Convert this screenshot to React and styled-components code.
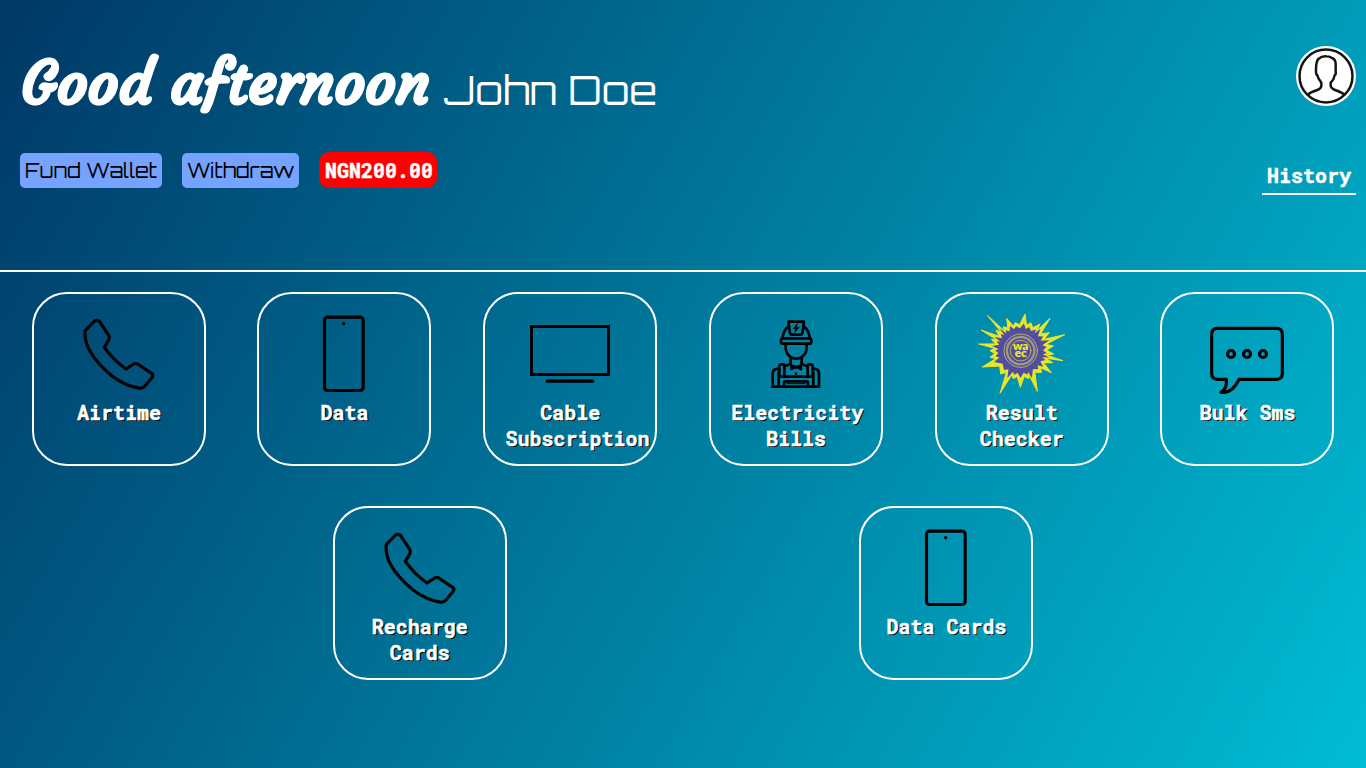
import React from "react";
import styled, { createGlobalStyle } from "styled-components";

const mono = `"Roboto Mono", "DejaVu Sans Mono", "Liberation Mono", monospace`;
const tech = `Orbitron, Inter, "Liberation Sans", sans-serif`;
const script = `Courgette, Lato, "Open Sans", sans-serif`;

const GlobalStyle = createGlobalStyle`
  * { box-sizing: border-box; }
  html, body { margin: 0; padding: 0; }
  body { overflow: hidden; }
`;

const Page = styled.div`
  min-height: 100vh;
  background: linear-gradient(120deg, #003866, #00bcd4);
  color: #fff;
  font: 700 20px/26px ${mono};
  -webkit-text-stroke: 0.5px currentColor;
`;

const Header = styled.header`
  display: flex;
  justify-content: space-between;
  height: 272px;
  padding: 0 10px 0 20px;
  border-bottom: 2px solid #fff;
`;

const Intro = styled.div`
  padding-top: 46px;
  -webkit-text-stroke: 0;
`;

const Greeting = styled.h1`
  display: flex;
  align-items: flex-start;
  height: 80px;
  margin: 0;
  font-weight: 400;
`;

const Salute = styled.span`
  width: 424px;
  padding-left: 1px;
  font: 700 60px/73px ${script};
  white-space: nowrap;
  -webkit-text-stroke: 1.2px currentColor;
`;

const Name = styled.span`
  padding-top: 8px;
  font: 400 40px/72px ${tech};
  white-space: nowrap;
`;

const Actions = styled.div`
  display: flex;
  align-items: flex-end;
  gap: 20px;
  margin-top: 26px;
`;

const Pill = styled.button`
  height: 35px;
  padding: 0 5px;
  border: 0;
  border-radius: 5px;
  background: #75a3ff;
  color: #000;
  font: 400 20px/35px ${tech};
  text-align: left;
`;

const Balance = styled.div`
  width: 118px;
  height: 36px;
  padding: 0 5px;
  border-radius: 10px;
  background: #f00;
  line-height: 36px;
  text-indent: 0.5px;
  -webkit-text-stroke: 0.5px currentColor;
`;

const Side = styled.div`
  display: flex;
  flex-direction: column;
  align-items: flex-end;
  padding-top: 46px;
`;

const Avatar = styled.svg`
  display: block;
  width: 60px;
  height: 60px;
`;

const History = styled.a`
  width: 94px;
  height: 37px;
  margin-top: 52px;
  padding: 4px 5px 0;
  border-bottom: 2px solid #fff;
`;

const Services = styled.main`
  display: flex;
  flex-wrap: wrap;
  justify-content: space-evenly;
`;

const Card = styled.section`
  width: 174px;
  height: 174px;
  margin: 20px;
  padding: 20px;
  border: 2px solid #fff;
  border-radius: 35px;
  text-align: center;
`;

const Icon = styled.svg`
  display: block;
  width: 130px;
  height: 80px;
  fill: none;
  stroke: #000;
  stroke-width: 9.5;
  stroke-linejoin: round;
  stroke-linecap: round;
`;

const Label = styled.p`
  margin: 5px 0 0;
  padding-left: 0.4px;
  text-shadow: 1.3px 1.3px 0 #000;
`;

const PhoneCall = () => (
  <Icon viewBox="103 101 390 240">
    <path d="M225 122 Q234 117 240 124 L267 165 Q271 171 268 177 L254 201 Q281 239 319 266 L342 251 Q348 248 354 251 L396 279 Q402 284 398 291 L376 317 Q370 324 361 324 Q318 318 278 288 Q231 249 211 213 Q195 185 196 155 Q196 151 200 147 Z" strokeWidth="9.500" />
  </Icon>
);

const Mobile = () => (
  <Icon viewBox="88 102 390 240">
    <rect x="224.500" y="111.500" width="116" height="220" rx="9" />
    <circle cx="282" cy="131" r="5" fill="#000" stroke="none" />
  </Icon>
);

const Television = () => (
  <Icon viewBox="90 102 390 240">
    <rect x="169.500" y="139.500" width="231" height="144" strokeLinejoin="miter" strokeWidth="9" />
    <path d="M217 303.500H353" strokeWidth="10" />
  </Icon>
);

const Electrician = () => (
  <Icon viewBox="93 102 390 240">
    <g strokeWidth="8">
      <path d="M265 125H312L307 160Q306 164 301 164H276Q271 164 270 160Z" />
      <path d="M292 131L279 146H288L284 157L298 142H289Z" fill="#000" strokeWidth="2" />
      <path d="M267 138Q249 151 248 175M310 138Q328 151 329 175" />
      <rect x="243" y="175" width="91" height="16" rx="6" />
      <path d="M257 192V205Q259 224 274 232Q288 240 303 232Q319 222 320 205V192" />
      <path d="M272 235V251M305 235V251" />
      <path d="M273 254L283 258H294L304 254V269L294 264H283L273 269Z" fill="#000" strokeWidth="5" />
      <path d="M218 320V281Q219 265 238 266M357 320V281Q356 265 338 266" />
      <path d="M238 289V257Q239 253 244 253H248Q253 253 253 258V291M323 291V258Q323 253 328 253H332Q338 253 338 258V289" />
      <path d="M253 258Q264 257 271 251M323 258Q312 257 305 251M236 290H340M236 277V320M340 277V320M218 320H357" />
      <path d="M252 318V308Q252 304 258 304H318Q324 304 324 308V318" />
      <path d="M260 311H316" strokeWidth="3" />
    </g>
    <circle cx="288" cy="281" r="4" fill="#000" stroke="none" />
  </Icon>
);

const rayTips = [
  [13, -110], [30, -84], [58, -80], [88, -97], [86, -54],
  [132, -48], [98, -14], [99, 10], [127, 30], [96, 36], [92, 66],
  [63, 65], [50, 122], [24, 84], [-1, 110], [-22, 84],
  [-62, 128], [-60, 70], [-115, 49], [-92, 20],
  [-92, 0], [-125, -20], [-88, -34], [-119, -62], [-74, -62], [-100, -106],
  [-52, -72], [-42, -97], [-16, -84],
];

// Builds a closed star whose spikes follow rayTips, with valleys at a fixed radius.
const burst = (reach, valley) => {
  const rays = rayTips
    .map(([x, y]) => ({ a: Math.atan2(y, x), r: Math.hypot(x, y) }))
    .sort((p, q) => p.a - q.a);
  return rays
    .flatMap(({ a, r }, i) => {
      const next = rays[(i + 1) % rays.length].a + (i + 1 === rays.length ? 2 * Math.PI : 0);
      const mid = (a + next) / 2;
      return [[a, reach(r)], [mid, valley]];
    })
    .map(([a, r]) => `${(182 + r * Math.cos(a)).toFixed(1)},${(152 + r * Math.sin(a)).toFixed(1)}`)
    .join(" ");
};

const Exam = () => (
  <Icon viewBox="-9 42 390 240">
    <g stroke="none">
      <polygon fill="#e9e62a" stroke="#e9e62a" strokeWidth="3" points={burst((r) => r, 78)} />
      <polygon fill="#514d9f" points={burst((r) => 73 + (r - 80) * 0.3, 67)} />
    </g>
    <g stroke="#cfc46a" strokeWidth="2.500">
      <circle cx="182" cy="152" r="50" />
      <circle cx="182" cy="152" r="31" />
      <circle cx="182" cy="152" r="41" strokeWidth="7" strokeDasharray="3 3" opacity=".65" />
    </g>
    <text fill="#f4ec1c" stroke="#f4ec1c" strokeWidth="0.500" fontFamily="Lato, sans-serif" fontWeight="900" fontSize="35" textAnchor="middle">
      <tspan x="182" y="151">wa</tspan>
      <tspan x="182" y="172">ec</tspan>
    </text>
  </Icon>
);

const Message = () => (
  <Icon viewBox="96 102 390 240">
    <path d="M203 145H379Q397 145 397 163V280Q397 298 379 298H267Q248 340 213 337Q232 325 229 298H203Q185 298 185 280V163Q185 145 203 145Z" />
    <circle cx="243" cy="222" r="10.500" />
    <circle cx="291" cy="222" r="10.500" />
    <circle cx="339" cy="222" r="10.500" />
  </Icon>
);

const services = [
  ["Airtime", PhoneCall],
  ["Data", Mobile],
  ["Cable Subscription", Television],
  ["Electricity Bills", Electrician],
  ["Result Checker", Exam],
  ["Bulk Sms", Message],
  ["Recharge Cards", PhoneCall],
  ["Data Cards", Mobile],
];

export default function App() {
  return (
    <Page>
      <GlobalStyle />
      <Header>
        <Intro>
          <Greeting>
            <Salute>Good afternoon</Salute>
            <Name>John Doe</Name>
          </Greeting>
          <Actions>
            <Pill>Fund Wallet</Pill>
            <Pill>Withdraw</Pill>
            <Balance>NGN200.00</Balance>
          </Actions>
        </Intro>
        <Side>
          <Avatar viewBox="138 48 180 180">
            <circle cx="228" cy="138" r="90" fill="#fff" />
            <g fill="none" stroke="#151515" strokeWidth="7.500" strokeLinejoin="round">
              <circle cx="228" cy="138" r="79.500" />
              <path d="M172 195Q180 187 202 180Q214 175 214 167V158Q204 147 202 136Q197 133 198 121Q198 94 205 87Q215 78 229 79Q238 79 246 84Q257 88 257 102V121Q259 133 254 136Q252 149 242 158V168Q244 176 255 180Q278 188 284 195" />
            </g>
          </Avatar>
          <History>History</History>
        </Side>
      </Header>
      <Services>
        {services.map(([label, Glyph]) => (
          <Card key={label}>
            <Glyph />
            <Label>{label}</Label>
          </Card>
        ))}
      </Services>
    </Page>
  );
}
